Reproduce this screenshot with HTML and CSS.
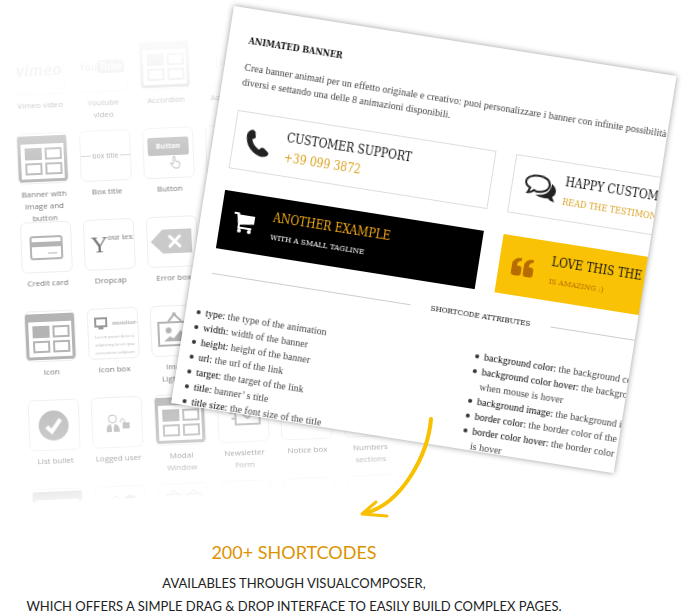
FILE: index.html
```html
<!DOCTYPE html>
<html lang="en">
<head>
<meta charset="utf-8">
<title>200+ Shortcodes</title>
<link rel="stylesheet" href="styles.css">
</head>
<body>
<svg width="0" height="0" class="defs" aria-hidden="true">
  <symbol id="layout" viewBox="0 0 51 51">
    <path fill="currentColor" fill-rule="evenodd" d="M1 3h49v46H1zM4 11v35h43V11z"/>
    <path fill="currentColor" d="M8 15h17v12H8z"/>
    <path fill="none" stroke="currentColor" stroke-width="2" d="M29 16h15v10H29zM9 31h15v10H9zM29 31h15v10H29z"/>
  </symbol>
</svg>
<main class="page">
  <section class="scene">
    <ul class="tiles">
      <li class="tile r1 c1"><span class="box logo-vimeo">vimeo</span>Vimeo video</li>
      <li class="tile r1 c2"><span class="box logo-tube">You<b>Tube</b></span>Youtube video</li>
      <li class="tile r1 c3"><span class="box"><svg><use href="#layout"/></svg></span>Accordion</li>
      <li class="tile r1 c4"><span class="box code">[spac</span>Ad spacer</li>

      <li class="tile r2 c1"><span class="box"><svg><use href="#layout"/></svg></span>Banner with image and button</li>
      <li class="tile r2 c2"><span class="box titled">box title</span>Box title</li>
      <li class="tile r2 c3"><span class="box pressed"><b>Button</b><svg class="hand" viewBox="0 0 12 14"><path d="M4 8V2q1-2 2 0v4l4 1q1 1 0 4l-1 2H5L1 8q1-1 3 1z" fill="#fff" stroke="currentColor"/></svg></span>Button</li>
      <li class="tile r2 c4"><span class="box"></span></li>

      <li class="tile r3 c1"><span class="box"><svg viewBox="0 0 51 51"><rect x="10" y="15" width="31" height="22" rx="2" fill="none" stroke="currentColor" stroke-width="2"/><path fill="currentColor" d="M10 20h31v5H10zM27 31h9v1h-9z"/></svg></span>Credit card</li>
      <li class="tile r3 c2"><span class="box drop"><b>Y</b>our tex</span>Dropcap</li>
      <li class="tile r3 c3"><span class="box"><svg viewBox="0 0 51 51"><path fill="currentColor" opacity=".7" d="M4 25 16 13h29v24H16z"/><path stroke="#fff" stroke-width="3" stroke-linecap="round" d="m23 20 10 10m0-10L23 30"/></svg></span>Error box</li>

      <li class="tile r4 c1"><span class="box"><svg><use href="#layout"/></svg></span>Icon</li>
      <li class="tile r4 c2"><span class="box lorem"><span class="lorem-head"><svg class="monitor" viewBox="0 0 14 12"><path fill="none" stroke="currentColor" stroke-width="2" d="M1 1h11v8H1zM4 11h5"/></svg>monitor-l</span><span>Lorem ipsum dolor si<br>adipiscing lorem ipsu<br>consectetur adipiscin</span></span>Icon box</li>
      <li class="tile r4 c3"><span class="box"><svg viewBox="0 0 51 51"><path fill="none" stroke="currentColor" stroke-width="2" d="M8 17h36v23H8zM18 16l6-7 7 7"/><circle cx="24" cy="9" r="2" fill="currentColor"/><circle cx="18" cy="25" r="3" fill="currentColor"/><path fill="currentColor" d="m13 36 6-5 4 2 7-8 10 11z"/></svg></span>Image Lightbox</li>

      <li class="tile r5 c1"><span class="box"><svg viewBox="0 0 51 51"><circle cx="25" cy="26" r="15" fill="currentColor"/><path fill="none" stroke="#fff" stroke-width="4" d="m18 27 5 5 9-12"/></svg></span>List bullet</li>
      <li class="tile r5 c2"><span class="box"><svg viewBox="0 0 51 51"><circle cx="21" cy="22" r="4" fill="none" stroke="currentColor"/><path fill="currentColor" d="M15 35q-1-7 4-8l1 4v4zm7 0v-4l1-4q5 1 5 8zM31 26h7v6h-7z"/><path fill="none" stroke="currentColor" d="M29 26v-2q2-4 4 0v2"/></svg></span>Logged user</li>
      <li class="tile r5 c3"><span class="box"><svg><use href="#layout"/></svg></span>Modal Window</li>
      <li class="tile r5 c4"><span class="box"><svg viewBox="0 0 51 51"><path fill="none" stroke="currentColor" stroke-width="2" d="M18 17h24v16H18zm0 0 12 10 12-10M12 21h5m-3 6h4"/></svg></span>Newsletter Form</li>
      <li class="tile r5 c5"><span class="box"><svg viewBox="0 0 51 51"><path fill="none" stroke="currentColor" stroke-width="2" d="M12 10h26v22H12zM17 26h16"/></svg></span>Notice box</li>
      <li class="tile r5 c6"><span class="box"></span>Numbers sections</li>

      <li class="tile r6 c1"><span class="box"><svg><use href="#layout"/></svg></span></li>
      <li class="tile r6 c2"><span class="box"><svg viewBox="0 0 51 51"><path fill="none" stroke="currentColor" d="m12 18 10-8 8 8"/><path fill="currentColor" d="M28 14q7-9 15 0v4H28z"/></svg></span></li>
      <li class="tile r6 c3"><span class="box"><svg viewBox="0 0 51 51"><path fill="none" stroke="currentColor" d="M9 11h14v14H9zm20 0h14v14H29zM12 11l4-4 4 4m12 0 4-4 4 4M12 16h8m12 0h8"/></svg></span></li>
      <li class="tile r6 c4"><span class="box"></span></li>
      <li class="tile r6 c5"><span class="box"></span></li>
      <li class="tile r6 c6"><span class="box"></span></li>
    </ul>

    <article class="sheet">
      <div class="content">
        <h2 class="heading">ANIMATED BANNER</h2>
        <p class="intro">Crea banner animati per un effetto originale e creativo: puoi personalizzare i banner con infinite possibilità s<br>diversi e settando una delle 8 animazioni disponibili.</p>
        <div class="banners">
          <div class="banner outline">
            <svg class="icon" viewBox="0 0 24 26"><path fill="#222" d="M3 1Q6-1 8 2l1 5q0 2-2 2l-1 1q2 6 8 9l2-2q1-1 3 0l4 3q2 2 0 4-4 3-9 1Q1 20 0 7q0-4 3-6z"/></svg>
            <div><h3>CUSTOMER SUPPORT</h3><p class="phone">+39 099 3872</p></div>
          </div>
          <div class="banner outline">
            <svg class="icon wide" viewBox="0 0 32 26"><path fill="#222" d="M27 7q5 3 5 8 0 3-3 5l3 5q-4 0-7-3-8 1-13-2 15 0 15-13z"/><path fill="#fff" stroke="#222" stroke-width="2" d="M13 1c7 0 12 3 12 8s-5 8-12 8l-3-1q-3 3-6 3l2-5q-5-2-5-6c0-4 5-7 12-7z"/></svg>
            <div><h3>HAPPY CUSTOM</h3><p class="read">READ THE TESTIMON</p></div>
          </div>
          <div class="banner black">
            <svg class="icon" viewBox="0 0 24 26"><path fill="#fff" d="M1 3h5l1 2h15v8L8 15v2h12v2H6v-4L4 5H1z"/><circle cx="8" cy="21" r="2" fill="#fff"/><circle cx="18" cy="21" r="2" fill="#fff"/></svg>
            <div><h3>ANOTHER EXAMPLE</h3><p>WITH A SMALL TAGLINE</p></div>
          </div>
          <div class="banner yellow">
            <svg class="icon" viewBox="0 0 24 26"><path fill="#b76b00" d="M10 4v3q-4 0-4 5h2q3 0 3 3v4q0 3-3 3H4q-3 0-3-3v-7q0-8 9-8zm12 0v3q-4 0-4 5h2q3 0 3 3v4q0 3-3 3h-4q-3 0-3-3v-7q0-8 9-8z"/></svg>
            <div><h3>LOVE THIS THE</h3><p>IS AMAZING :)</p></div>
          </div>
        </div>
        <h4 class="divider">SHORTCODE ATTRIBUTES</h4>
        <div class="lists">
          <ul>
            <li><b>type:</b> the type of the animation</li>
            <li><b>width:</b> width of the banner</li>
            <li><b>height:</b> height of the banner</li>
            <li><b>url:</b> the url of the link</li>
            <li><b>target:</b> the target of the link</li>
            <li><b>title:</b> banner’ s title</li>
            <li><b>title size:</b> the font size of the title</li>
          </ul>
          <ul>
            <li><b>background color:</b> the background co</li>
            <li><b>background color hover:</b> the backgro<br>when mouse is hover</li>
            <li><b>background image:</b> the background i</li>
            <li><b>border color:</b> the border color of the</li>
            <li><b>border color hover:</b> the border color<br>is hover</li>
          </ul>
        </div>
      </div>
    </article>

    <svg class="arrow" viewBox="0 0 80 106" aria-hidden="true">
      <path fill="none" stroke="#f9c000" stroke-width="4" stroke-linecap="round" d="M75 4C72 40 46 88 10 98"/>
      <path fill="none" stroke="#f9c000" stroke-width="3" stroke-linecap="round" stroke-linejoin="round" d="M20 87 6 99l25 2"/>
    </svg>
  </section>

  <section class="caption">
    <h1>200+ SHORTCODES</h1>
    <p>AVAILABLES THROUGH VISUALCOMPOSER,<br>WHICH OFFERS A SIMPLE DRAG &amp; DROP INTERFACE TO EASILY BUILD COMPLEX PAGES.</p>
  </section>
</main>
</body>
</html>
```

FILE: styles.css
```css
* { box-sizing: border-box; margin: 0; padding: 0; }
body { background: #fff; overflow-x: hidden; }
ul { list-style: none; }
.defs { position: absolute; }

.scene { position: relative; height: 532px; }

/* Tilted catalogue of shortcode tiles */
.tiles {
  display: grid;
  grid-template-columns: repeat(6, 51px);
  grid-auto-rows: 89px;
  column-gap: 12px;
  position: absolute;
  left: 12px;
  top: 45px;
  height: 458px;
  overflow: hidden;
  transform: rotate(-2.5deg);
  transform-origin: 0 0;
  -webkit-mask-image: linear-gradient(rgba(0,0,0,.05), rgba(0,0,0,.15) 40px, rgba(0,0,0,.5) 75px, #000 150px, #000 330px, rgba(0,0,0,.6) 420px, rgba(0,0,0,.15) 458px);
  mask-image: linear-gradient(rgba(0,0,0,.05), rgba(0,0,0,.15) 40px, rgba(0,0,0,.5) 75px, #000 150px, #000 330px, rgba(0,0,0,.6) 420px, rgba(0,0,0,.15) 458px);
}
.tile { font: 8px/12px "Open Sans", sans-serif; color: #777; text-align: center; }
.box {
  display: flex;
  align-items: center;
  justify-content: center;
  height: 51px;
  margin-bottom: 4px;
  border: 1px solid #eee;
  border-radius: 6px;
  overflow: hidden;
  color: #b4b4b4;
}
.box > svg { width: 51px; height: 51px; flex: none; }
.r1 { grid-row: 1; } .r2 { grid-row: 2; } .r3 { grid-row: 3; }
.r4 { grid-row: 4; } .r5 { grid-row: 5; } .r6 { grid-row: 6; }
.c1 { grid-column: 1; } .c2 { grid-column: 2; } .c3 { grid-column: 3; }
.c4 { grid-column: 4; } .c5 { grid-column: 5; } .c6 { grid-column: 6; }
.logo-vimeo { font: italic bold 16px "Open Sans", sans-serif; }
.logo-tube { font: bold 10px "Liberation Sans", sans-serif; }
.logo-tube b { padding: 1px 2px; border-radius: 3px; background: #b4b4b4; color: #fff; }
.code { font-size: 10px; }
.titled { gap: 1px; color: #999; font-size: 7px; white-space: nowrap; }
.titled::before, .titled::after { content: ""; flex: 1; height: 1px; background: #ccc; }
.pressed { flex-direction: column; }
.pressed b { padding: 3px 8px; border-radius: 2px; background: #b4b4b4; color: #fff; font-size: 7px; }
.box > .hand { width: 12px; height: 14px; margin-left: 12px; }
.drop { justify-content: flex-start; align-items: flex-start; padding: 12px 0 0 6px; font: 9px "Liberation Serif", serif; color: #777; white-space: nowrap; }
.drop b { font-weight: normal; font-size: 24px; line-height: 24px; }
.lorem { flex-direction: column; justify-content: flex-start; align-items: flex-start; gap: 4px; padding: 8px 0 0 6px; font-size: 4px; line-height: 8px; text-align: left; white-space: nowrap; }
.lorem-head { display: flex; align-items: center; gap: 4px; font: bold 7px "Liberation Serif", serif; }
.monitor { width: 14px; height: 12px; color: #999; }

/* Tilted documentation sheet */
.sheet {
  position: absolute;
  left: 234px;
  top: 6px;
  width: 448px;
  height: 402px;
  padding: 25px 20px 0;
  overflow: hidden;
  transform: rotate(9deg);
  transform-origin: 0 0;
  background: #fff;
  box-shadow: 0 0 6px rgba(0,0,0,.4);
  font: 12px/15px "DejaVu Serif Condensed", "DejaVu Serif", serif;
  color: #444;
}
.content { width: 544px; }
.heading { font-size: 9px; line-height: 15px; color: #111; }
.intro { margin-top: 11px; white-space: nowrap; }
.intro, .lists { font-family: "Liberation Serif", serif; font-size: 10px; }
.banners { display: grid; grid-template-columns: 1fr 1fr; gap: 22px 20px; margin-top: 21px; }
.banner { display: flex; align-items: center; gap: 16px; height: 59px; padding-left: 12px; white-space: nowrap; }
.icon { width: 24px; height: 26px; flex: none; }
.icon.wide { width: 32px; margin-right: -8px; }
.banner h3 { font-weight: normal; font-size: 12px; line-height: 20px; color: #111; }
.banner p { font-size: 8px; line-height: 20px; }
.outline { border: 1px solid #ddd; }
.banner .phone { font-size: 12px; color: #d9a01c; }
.banner .read { font-size: 9px; color: #d9a01c; }
.black { background: #000; color: #fff; }
.banner.black h3 { color: #fbb016; }
.yellow { background: #f9c205; color: #b76b00; }
.divider { display: flex; align-items: center; gap: 20px; margin-top: 18px; font-weight: normal; font-size: 8px; color: #111; }
.divider::before, .divider::after { content: ""; flex: 1; height: 1px; background: #ccc; }
.lists { display: grid; grid-template-columns: 1fr 1fr; column-gap: 20px; margin-top: 25px; }
.lists li { position: relative; white-space: nowrap; }
.lists li::before { content: ""; position: absolute; left: -9px; top: 6px; width: 4px; height: 4px; border-radius: 50%; background: #333; }
.lists b { font-weight: normal; color: #000; }

.arrow { position: absolute; left: 356px; top: 415px; width: 80px; height: 106px; }

.caption {
  padding-right: 96px;
  text-align: center;
  font-family: Lato, sans-serif;
  color: #222;
}
.caption h1 { font-weight: normal; font-size: 18px; line-height: 40px; color: #dc9300; }
.caption p { font-size: 13px; line-height: 23px; white-space: nowrap; }
```
